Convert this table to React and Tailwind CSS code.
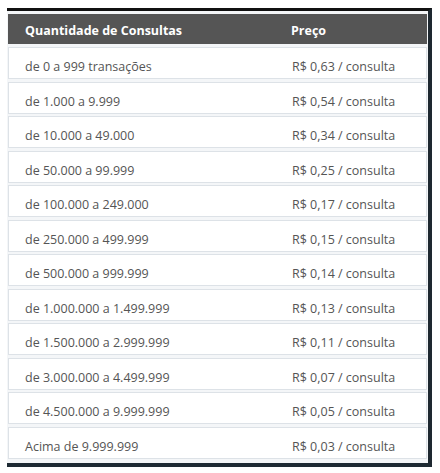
import React from "react";

const faixas = [
  ["de 0 a 999 transações", "R$ 0,63 / consulta"],
  ["de 1.000 a 9.999", "R$ 0,54 / consulta"],
  ["de 10.000 a 49.000", "R$ 0,34 / consulta"],
  ["de 50.000 a 99.999", "R$ 0,25 / consulta"],
  ["de 100.000 a 249.000", "R$ 0,17 / consulta"],
  ["de 250.000 a 499.999", "R$ 0,15 / consulta"],
  ["de 500.000 a 999.999", "R$ 0,14 / consulta"],
  ["de 1.000.000 a 1.499.999", "R$ 0,13 / consulta"],
  ["de 1.500.000 a 2.999.999", "R$ 0,11 / consulta"],
  ["de 3.000.000 a 4.499.999", "R$ 0,07 / consulta"],
  ["de 4.500.000 a 9.999.999", "R$ 0,05 / consulta"],
  ["Acima de 9.999.999", "R$ 0,03 / consulta"],
];

export default function App() {
  return (
    <div
      className="w-[440px] h-[473px] bg-white pt-[8px] pl-[7px] overflow-hidden"
      style={{ fontFamily: '"Open Sans", "Liberation Sans", sans-serif' }}
    >
      <div className="w-[425px] border-t-[3px] border-t-[#111] border-r-[4px] border-r-[#1e2830] border-b-[4px] border-b-[#1e2a33]">
        <div className="pl-[1px] pt-[3px] pb-[4px] pr-[1px] bg-[#f4f6f8]">
          <div className="h-[30px] pt-[5px] bg-[#555555] flex items-center text-white text-[12.5px] font-bold">
            <div className="w-[283px] pl-[17px]">Quantidade de Consultas</div>
            <div>Preço</div>
          </div>
          <div className="flex flex-col gap-[2.5px] mt-[3px]">
            {faixas.map(([qtd, preco]) => (
              <div
                key={qtd}
                className="h-[32px] pt-[9px] bg-white border border-[#dde2e7] flex items-center text-[12.5px] text-[#555]"
              >
                <div className="w-[283px] pl-[16px]">{qtd}</div>
                <div>{preco}</div>
              </div>
            ))}
          </div>
        </div>
      </div>
    </div>
  );
}
